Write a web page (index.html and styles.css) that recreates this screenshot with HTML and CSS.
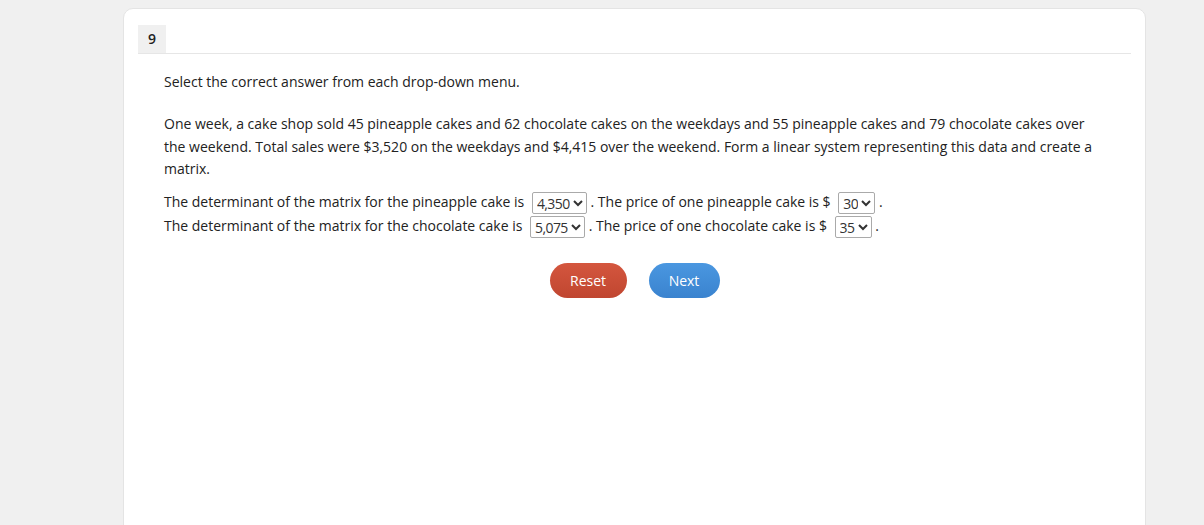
FILE: index.html
```html
<!DOCTYPE html>
<html>
<head>
<meta charset="utf-8">
<link rel="stylesheet" href="styles.css">
</head>
<body>
<div class="page">
  <div class="card">
    <div class="header"><span class="qnum">9</span></div>
    <div class="content">
      <p class="instr">Select the correct answer from each drop-down menu.</p>
      <p class="prompt">One week, a cake shop sold 45 pineapple cakes and 62 chocolate cakes on the weekdays and 55 pineapple cakes and 79 chocolate cakes over the weekend. Total sales were $3,520 on the weekdays and $4,415 over the weekend. Form a linear system representing this data and create a matrix.</p>
      <div class="line">The determinant of the matrix for the pineapple cake is <select class="sel"><option>4,350</option></select> . The price of one pineapple cake is $ <select class="sel"><option>30</option></select> .</div>
      <div class="line">The determinant of the matrix for the chocolate cake is <select class="sel"><option>5,075</option></select> . The price of one chocolate cake is $ <select class="sel"><option>35</option></select> .</div>
      <div class="buttons">
        <button class="btn reset">Reset</button>
        <button class="btn next">Next</button>
      </div>
    </div>
  </div>
</div>
</body>
</html>
```
FILE: styles.css
```css
html, body {
  margin: 0;
  padding: 0;
  background: #f0f0f0;
  font-family: "Open Sans", "Liberation Sans", sans-serif;
  color: #222;
  overflow: hidden;
}
.page {
  padding: 8px 58px 0 123px;
}
.card {
  background: #fff;
  border: 1px solid #e4e4e4;
  border-radius: 10px;
  padding: 16px 14px 0 14px;
  height: 600px;
  box-sizing: border-box;
}
.header {
  border-bottom: 1px solid #e6e6e6;
  height: 28px;
}
.qnum {
  display: inline-block;
  width: 28px;
  height: 28px;
  line-height: 28px;
  text-align: center;
  background: #f0f0f0;
  font-size: 14px;
  font-weight: 600;
  color: #222;
}
.content {
  padding: 0 26px;
  font-size: 14px;
}
.instr {
  margin: 17px 0 0 0;
  line-height: 22px;
}
.prompt {
  margin: 20px 0 0 0;
  line-height: 22.5px;
}
.line {
  line-height: 24px;
}
.prompt + .line {
  margin-top: 9px;
}
.sel {
  font-family: "Open Sans", "Liberation Sans", sans-serif;
  font-size: 14px;
  letter-spacing: -0.6px;
  color: #333;
  height: 22px;
  padding: 0;
  border: 1px solid #aaa;
  border-radius: 2px;
  background: #fff;
  margin: 0 0 0 4px;
  vertical-align: middle;
}
.buttons {
  display: flex;
  justify-content: center;
  gap: 22px;
  margin-top: 25px;
}
.btn {
  font-family: "Open Sans", "Liberation Sans", sans-serif;
  font-size: 14px;
  color: #fff;
  border: none;
  border-radius: 18px;
  height: 35px;
  cursor: pointer;
}
.reset {
  width: 77px;
  background: linear-gradient(#d4563e, #c04630);
}
.next {
  width: 71px;
  background: linear-gradient(#4a97e0, #3a83cf);
}
```
